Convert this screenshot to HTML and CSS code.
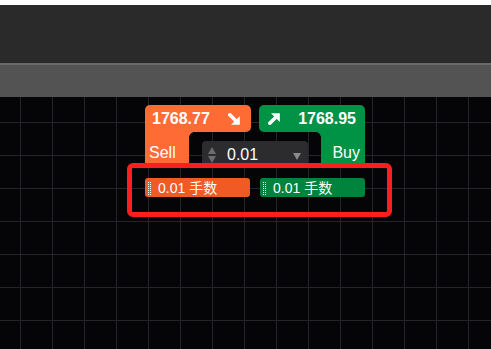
FILE: index.html
```html
<!DOCTYPE html>
<html lang="zh">
<head>
<meta charset="utf-8">
<title>Trade panel</title>
<link rel="stylesheet" href="styles.css">
</head>
<body>
<div class="topstrip"></div>
<div class="toolbar"></div>
<div class="divider"></div>
<div class="subbar"></div>
<div class="canvas">
  <div class="panel">
    <div class="heads">
      <div class="head sell">
        <span class="price">1768.77</span>
        <svg class="arrow" width="12" height="12" viewBox="0 0 12 12"><path d="M1.8 1.8 L7 7" stroke="#fff" stroke-width="3.6" stroke-linecap="square"/><path d="M11.8 3 V11.8 H3 Z" fill="#fff"/></svg>
      </div>
      <div class="head buy">
        <svg class="arrow" width="12" height="12" viewBox="0 0 12 12"><path d="M1.8 10.2 L7 5" stroke="#fff" stroke-width="3.6" stroke-linecap="square"/><path d="M3 0.2 H11.8 V9 Z" fill="#fff"/></svg>
        <span class="price">1768.95</span>
      </div>
    </div>
    <div class="mid">
      <div class="stem sell">Sell</div>
      <div class="well">
        <div class="qty">
          <span class="spin"><i class="up"></i><i class="down"></i></span>
          <span class="qty-val">0.01</span>
          <i class="caret"></i>
        </div>
      </div>
      <div class="stem buy">Buy</div>
    </div>
    <div class="quick">
      <div class="chip sell"><svg class="grip" width="4" height="13" viewBox="0 0 4 13"><g fill="#fff"><rect x="0" y="0" width="1" height="1"/><rect x="2" y="0" width="1" height="1"/><rect x="0" y="2" width="1" height="1"/><rect x="2" y="2" width="1" height="1"/><rect x="0" y="4" width="1" height="1"/><rect x="2" y="4" width="1" height="1"/><rect x="0" y="6" width="1" height="1"/><rect x="2" y="6" width="1" height="1"/><rect x="0" y="8" width="1" height="1"/><rect x="2" y="8" width="1" height="1"/><rect x="0" y="10" width="1" height="1"/><rect x="2" y="10" width="1" height="1"/><rect x="0" y="12" width="1" height="1"/><rect x="2" y="12" width="1" height="1"/></g></svg><span>0.01 手数</span></div>
      <div class="chip buy"><svg class="grip" width="4" height="13" viewBox="0 0 4 13"><g fill="#fff"><rect x="0" y="0" width="1" height="1"/><rect x="2" y="0" width="1" height="1"/><rect x="0" y="2" width="1" height="1"/><rect x="2" y="2" width="1" height="1"/><rect x="0" y="4" width="1" height="1"/><rect x="2" y="4" width="1" height="1"/><rect x="0" y="6" width="1" height="1"/><rect x="2" y="6" width="1" height="1"/><rect x="0" y="8" width="1" height="1"/><rect x="2" y="8" width="1" height="1"/><rect x="0" y="10" width="1" height="1"/><rect x="2" y="10" width="1" height="1"/><rect x="0" y="12" width="1" height="1"/><rect x="2" y="12" width="1" height="1"/></g></svg><span>0.01 手数</span></div>
    </div>
  </div>
  <div class="highlight"></div>
</div>
</body>
</html>
```

FILE: styles.css
```css
html, body {
  margin: 0;
  height: 100%;
}
body {
  display: flex;
  flex-direction: column;
  overflow: hidden;
  font-family: "Liberation Sans", Arial, "Noto Sans CJK SC", sans-serif;
  background: #050508;
}
.topstrip { height: 5px; background: #ffffff; }
.toolbar { height: 58px; background: #2a2a2a; }
.divider { height: 2px; background: #686868; }
.subbar { height: 32px; background: #535353; }

.canvas {
  position: relative;
  flex: 1;
  background-color: #050508;
  background-image:
    linear-gradient(to right, #24242b 1px, transparent 1px),
    linear-gradient(to bottom, #24242b 1px, transparent 1px);
  background-size: 32px 100%, 100% 33px;
  background-position: 20px 0, 0 25px;
  padding: 8px 0 0 145px;
}

.panel { width: 220px; color: #fff; }

.heads { display: flex; gap: 8px; height: 27px; }
.head {
  width: 106px;
  display: flex;
  align-items: center;
  justify-content: space-between;
  box-sizing: border-box;
  font-weight: bold;
  font-size: 16px;
  padding-top: 1px;
}
.head.sell {
  background: #ff6b35;
  border-radius: 5px 5px 5px 0;
  padding-left: 7px;
  padding-right: 11px;
}
.head.buy {
  background: #009245;
  border-radius: 5px 5px 0 5px;
  padding-left: 9px;
  padding-right: 9px;
}
.arrow { display: block; width: 12px; height: 12px; }

.mid { display: flex; height: 34px; }
.stem {
  position: relative;
  width: 44px;
  box-sizing: border-box;
  font-size: 16px;
  line-height: 18px;
  padding-top: 12px;
}
.stem.sell { background: #ff6b35; padding-left: 4px; }
.stem.buy { background: #009245; text-align: right; padding-right: 5px; }
.stem.sell::after,
.stem.buy::after {
  content: "";
  position: absolute;
  top: 0;
  width: 5px;
  height: 5px;
}
.stem.sell::after {
  left: 100%;
  background: radial-gradient(circle at 100% 100%, transparent 4.5px, #ff6b35 5px);
}
.stem.buy::after {
  right: 100%;
  background: radial-gradient(circle at 0 100%, transparent 4.5px, #009245 5px);
}

.well { flex: 1; padding: 9px 13px 0; }
.qty {
  height: 25px;
  background: #2c2c2e;
  border-radius: 4px 4px 0 0;
  display: flex;
  align-items: flex-start;
  box-sizing: border-box;
  padding: 2px 0 0 6px;
}
.spin {
  display: flex;
  flex-direction: column;
  gap: 2px;
  margin-top: 4px;
  width: 8px;
}
.spin i {
  display: block;
  width: 0;
  height: 0;
  border-left: 4px solid transparent;
  border-right: 4px solid transparent;
}
.spin .up { border-bottom: 7px solid #6c6c6e; }
.spin .down { border-top: 7px solid #6c6c6e; }
.qty-val {
  font-size: 16px;
  line-height: 23px;
  margin-left: 11px;
  flex: 1;
}
.caret {
  display: block;
  width: 0;
  height: 0;
  margin: 10px 7px 0 0;
  border-left: 4px solid transparent;
  border-right: 4px solid transparent;
  border-top: 7px solid #8a8a8c;
}

.quick { display: flex; gap: 10px; margin-top: 12px; }
.chip {
  width: 105px;
  height: 19px;
  border-radius: 3px;
  display: flex;
  align-items: center;
  box-sizing: border-box;
  padding-left: 3px;
  font-size: 14px;
}
.chip.sell { background: #f05a24; }
.chip.buy { background: #00843d; }
.chip span { margin-left: 6px; line-height: 19px; padding-top: 2px; }
.grip {
  display: block;
  width: 4px;
  height: 13px;
  margin-top: 1px;
}

.highlight {
  position: absolute;
  left: 127px;
  top: 66px;
  width: 265px;
  height: 54px;
  box-sizing: border-box;
  border: 5px solid #ff1e1e;
  border-radius: 6px;
}
```
